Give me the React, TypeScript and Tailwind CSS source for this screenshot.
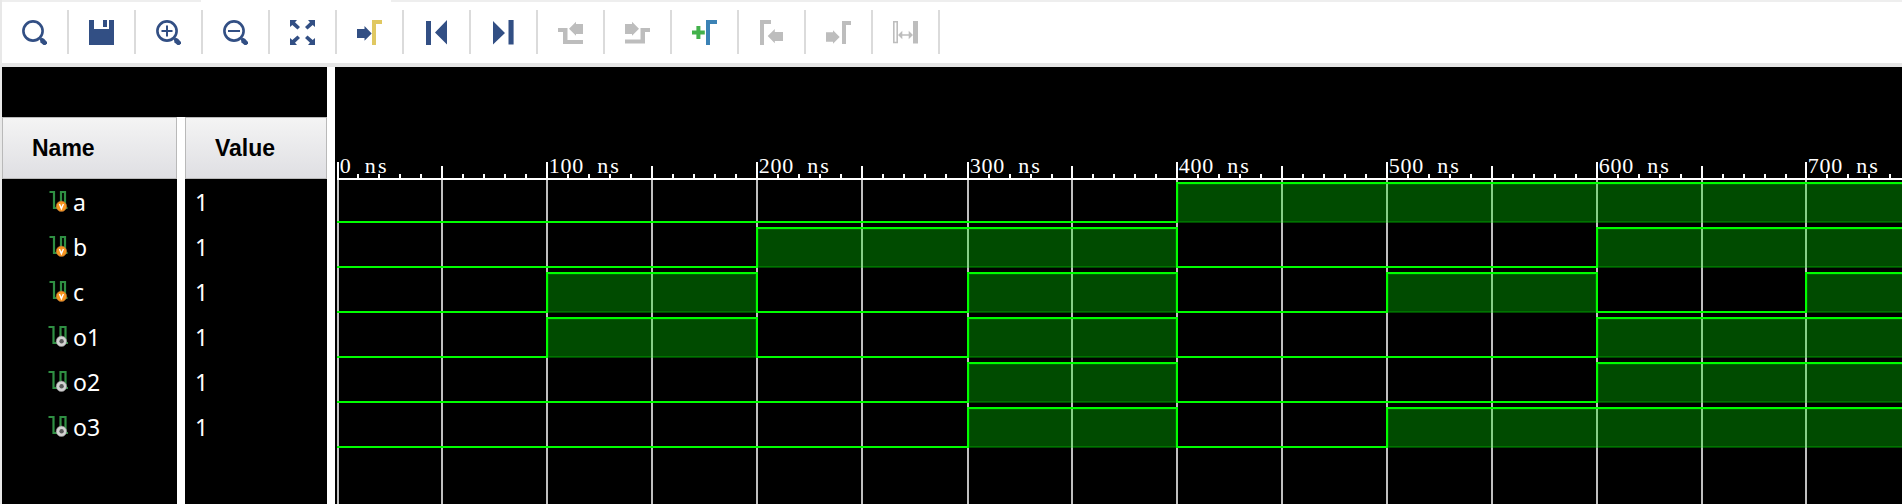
import React from "react";

const SIGNALS = [
  { name: "a", input: true, high: [[400, 800]] },
  { name: "b", input: true, high: [[200, 400], [600, 800]] },
  { name: "c", input: true, high: [[100, 200], [300, 400], [500, 600], [700, 800]] },
  { name: "o1", input: false, high: [[100, 200], [300, 400], [600, 800]] },
  { name: "o2", input: false, high: [[300, 400], [600, 800]] },
  { name: "o3", input: false, high: [[300, 400], [500, 800]] },
];

// Left edge of each 50 ns grid line, relative to the waveform pane.
const GRID = [2, 106, 211, 316, 421, 526, 632, 736, 841, 946, 1051, 1156, 1261, 1366, 1470];
const MINOR = [21, 42, 63, 84];
const px = (ns: number) => (ns >= 800 ? 1600 : GRID[ns / 50]);

const ROW_TOP = 115;
const PITCH = 45;
const CHAR = 11.7;

function Tool({ children }: { children: React.ReactNode }) {
  return (
    <div className="flex h-11 w-[67px] shrink-0 items-start border-r-2 border-[#dbdbdb] pl-5 pt-2.5">
      <svg width="25" height="25" viewBox="0 0 25 25" className="overflow-visible">
        {children}
      </svg>
    </div>
  );
}

const NAVY = "#324f84";
const GREY = "#bdbdbd";

function Lens() {
  return (
    <g>
      <circle cx="11" cy="11" r="9.6" fill="none" stroke={NAVY} strokeWidth="2.6" />
      <path d="M17.8 19L19.8 17.8L22 18.8L25 22V23.5L23.5 25H21.5L18.5 22.5Z" fill={NAVY} />
    </g>
  );
}

function Toolbar() {
  return (
    <div className="flex h-[61px] shrink-0 items-start pt-2">
      <Tool><Lens /></Tool>
      <Tool>
        <path d="M0 0H5V9H20V0H25V25H0Z" fill={NAVY} />
        <path d="M14 0H18V7H14Z" fill={NAVY} />
      </Tool>
      <Tool>
        <Lens />
        <path d="M11 5.5V16.5M5.5 11H16.5" stroke={NAVY} strokeWidth="2" />
      </Tool>
      <Tool>
        <Lens />
        <path d="M5 11H17" stroke={NAVY} strokeWidth="2" />
      </Tool>
      <Tool>
        <path d="M0 0H7L5 2.3L10 7L7.5 9.5L2.3 5L0 7ZM25 0V7L22.7 5L17.5 9.5L15 7L20 2.3L18 0ZM0 25V18L2.3 20L7.5 15.5L10 18L5 22.7L7 25ZM25 25H18L20 22.7L15 18L17.5 15.5L22.7 20L25 18Z" fill={NAVY} />
      </Tool>
      <Tool>
        <path d="M0 9H7.5V6L14.7 13.4L7.5 20.7V18H0Z" fill={NAVY} />
        <path d="M15 0H25V4H19V25H15Z" fill="#e0c861" />
      </Tool>
      <Tool>
        <path d="M2 1H7V25H2ZM23 0V24.5L11 12.5Z" fill={NAVY} />
      </Tool>
      <Tool>
        <path d="M2 1V24.5L14 13ZM17.5 0H22.6V24.5H17.5Z" fill={NAVY} />
      </Tool>
      <Tool>
        <path d="M0 8H9.5V20H25V24H5V12H0ZM11 8.7L18 1.7V4H25V14H18V15.7Z" fill={GREY} />
      </Tool>
      <Tool>
        <path d="M0 19.5H15.5V8H25V12H20V23.5H0ZM0 4H7V1.7L14 8.7L7 15.7V14H0Z" fill={GREY} />
      </Tool>
      <Tool>
        <path d="M4.4 6H8.4V10.5H12.8V14.5H8.4V19H4.4V14.5H0V10.5H4.4Z" fill="#43b14b" />
        <path d="M14 0H25V4H18V25H14Z" fill="#3b82b5" />
      </Tool>
      <Tool>
        <path d="M1 0H12V4H5V25H1ZM8.7 16L15.8 9V12H24V21H15.8V23.3Z" fill={GREY} />
      </Tool>
      <Tool>
        <path d="M0 12.3H7V10.3L13.7 17L7 23.7V21.7H0ZM16 1H25V5H20V24H16Z" fill={GREY} />
      </Tool>
      <Tool>
        <path d="M0.8 1.8H4.2V22.5H0.8ZM7 15H18" fill="none" stroke={GREY} strokeWidth="1.6" />
        <path d="M20 1H25V23.5H20ZM5 15L9.3 10.7V19.3ZM20 15L15.7 10.7V19.3Z" fill={GREY} />
      </Tool>
    </div>
  );
}

function SignalIcon({ input }: { input: boolean }) {
  return (
    <svg width="20" height="21" viewBox="0 0 20 21" className="shrink-0 overflow-visible">
      <path
        d={input ? "M1.5 1H6V17H13V1H17V17H19.5" : "M0.5 1H5.5V17H12.5V1H17.5V17H20"}
        fill="none"
        stroke="#2f8f43"
        strokeWidth="2.2"
      />
      <circle cx="13.4" cy="15.3" r="5.2" fill={input ? "#f7941e" : "#d2d2d2"} stroke={input ? "#a8713a" : "#8c8c8c"} strokeWidth="0.6" />
      {input ? (
        <path d="M11.4 12.9L13.4 17.6L15.4 12.9" fill="none" stroke="#fff" strokeWidth="1.4" />
      ) : (
        <circle cx="13.6" cy="15.3" r="2.2" fill="#5a5a5a" />
      )}
    </svg>
  );
}

function Header({ label, pad }: { label: string; pad: string }) {
  return (
    <div className={`flex h-[62px] shrink-0 items-center border border-[#b9b9b9] bg-linear-to-b from-[#f4f4f4] to-[#dfdfe3] font-['Liberation_Sans',sans-serif] text-[23px] font-bold text-black ${pad}`}>
      {label}
    </div>
  );
}

function TimeLabel({ x, value }: { x: number; value: string }) {
  const start = x + 2.8;
  const unit = start + (value.length + 1) * CHAR;
  return (
    <text y="106" fontSize="22" className="font-['Liberation_Serif',serif]">
      {value.split("").map((c, k) => (
        <tspan key={k} x={start + k * CHAR}>{c}</tspan>
      ))}
      <tspan x={unit + 1.6}>n</tspan>
      <tspan x={unit + CHAR + 3}>s</tspan>
    </text>
  );
}

function Waveforms() {
  return (
    <svg width="1567" height="437" viewBox="0 0 1567 437" className="block" shapeRendering="crispEdges">
      {GRID.map((x) => (
        <rect key={x} x={x} y="113" width="2" height="324" fill="#bfbfbf" />
      ))}
      {SIGNALS.map((s, i) => {
        const top = ROW_TOP + i * PITCH;
        let d = `M2 ${top + 40}`;
        s.high.forEach(([from, to]) => {
          d += `H${px(from) + 1}V${top + 1}H${px(to) + 1}V${top + 40}`;
        });
        d += "H1600";
        return (
          <g key={s.name}>
            {s.high.map(([from, to]) => (
              <g key={from}>
                <rect x={px(from)} y={top} width={px(to) - px(from) + 2} height="41" fill="#004b00" />
                <rect x={px(from) + 2} y={top + 2} width={px(to) - px(from) - 2} height="1" fill="#006400" />
                <rect x={px(from) + 2} y={top + 2} width="1" height="38" fill="#006400" />
                <rect x={px(to) - 1} y={top + 2} width="1" height="38" fill="#006400" />
                <rect x={px(from) + 2} y={top + 39} width={px(to) - px(from) - 2} height="1" fill="#007400" />
                {GRID.filter((x) => x > px(from) && x < px(to)).map((x) => (
                  <rect key={x} x={x} y={top + 2} width="2" height="39" fill="#86cf86" />
                ))}
              </g>
            ))}
            <path d={d} fill="none" stroke="#00ff00" strokeWidth="2" />
          </g>
        );
      })}
      <rect x="2" y="111" width="1565" height="2" fill="#fff" />
      {GRID.map((x, i) => (
        <g key={x} fill="#fff">
          <rect x={x} y={i % 2 ? 99 : 95} width="2" height={i % 2 ? 12 : 16} />
          {MINOR.map((m) => (
            <rect key={m} x={x + m - (i === 0 ? 1 : 0)} y="107" width="2" height="4" />
          ))}
          {i % 2 === 0 && <TimeLabel x={x} value={String(i * 50)} />}
        </g>
      ))}
    </svg>
  );
}

export default function App() {
  return (
    <div className="flex h-[504px] w-[1902px] flex-col overflow-hidden border-l-2 border-[#e8e8e8] bg-white">
      <div className="flex h-0.5 shrink-0">
        <div className="w-[199px] bg-[#eeeeee]" />
        <div className="w-[190px]" />
        <div className="flex-1 bg-[#eeeeee]" />
      </div>
      <Toolbar />
      <div className="h-1 shrink-0 bg-[#e6e6e6]" />
      <div className="flex h-[437px] shrink-0">
        <div className="flex w-[325px] shrink-0 flex-col bg-black">
          <div className="h-[50px] shrink-0" />
          <div className="flex flex-1 bg-white">
            <div className="flex w-[175px] flex-col bg-black">
              <Header label="Name" pad="pl-[29px]" />
              <div className="font-['Noto_Sans',sans-serif] text-[23px] text-white">
                {SIGNALS.map((s) => (
                  <div key={s.name} className="flex h-[45px] items-center pl-[46px]">
                    <SignalIcon input={s.input} />
                    <span className="ml-[5px] pt-0.5">{s.name}</span>
                  </div>
                ))}
              </div>
            </div>
            <div className="ml-2 flex w-[142px] flex-col bg-black">
              <Header label="Value" pad="pl-[29px]" />
              <div className="font-['Noto_Sans',sans-serif] text-[23px] text-white">
                {SIGNALS.map((s) => (
                  <div key={s.name} className="flex h-[45px] items-center pl-[10px] pt-0.5">1</div>
                ))}
              </div>
            </div>
          </div>
        </div>
        <div className="ml-2 min-w-0 flex-1 bg-black">
          <Waveforms />
        </div>
      </div>
    </div>
  );
}
